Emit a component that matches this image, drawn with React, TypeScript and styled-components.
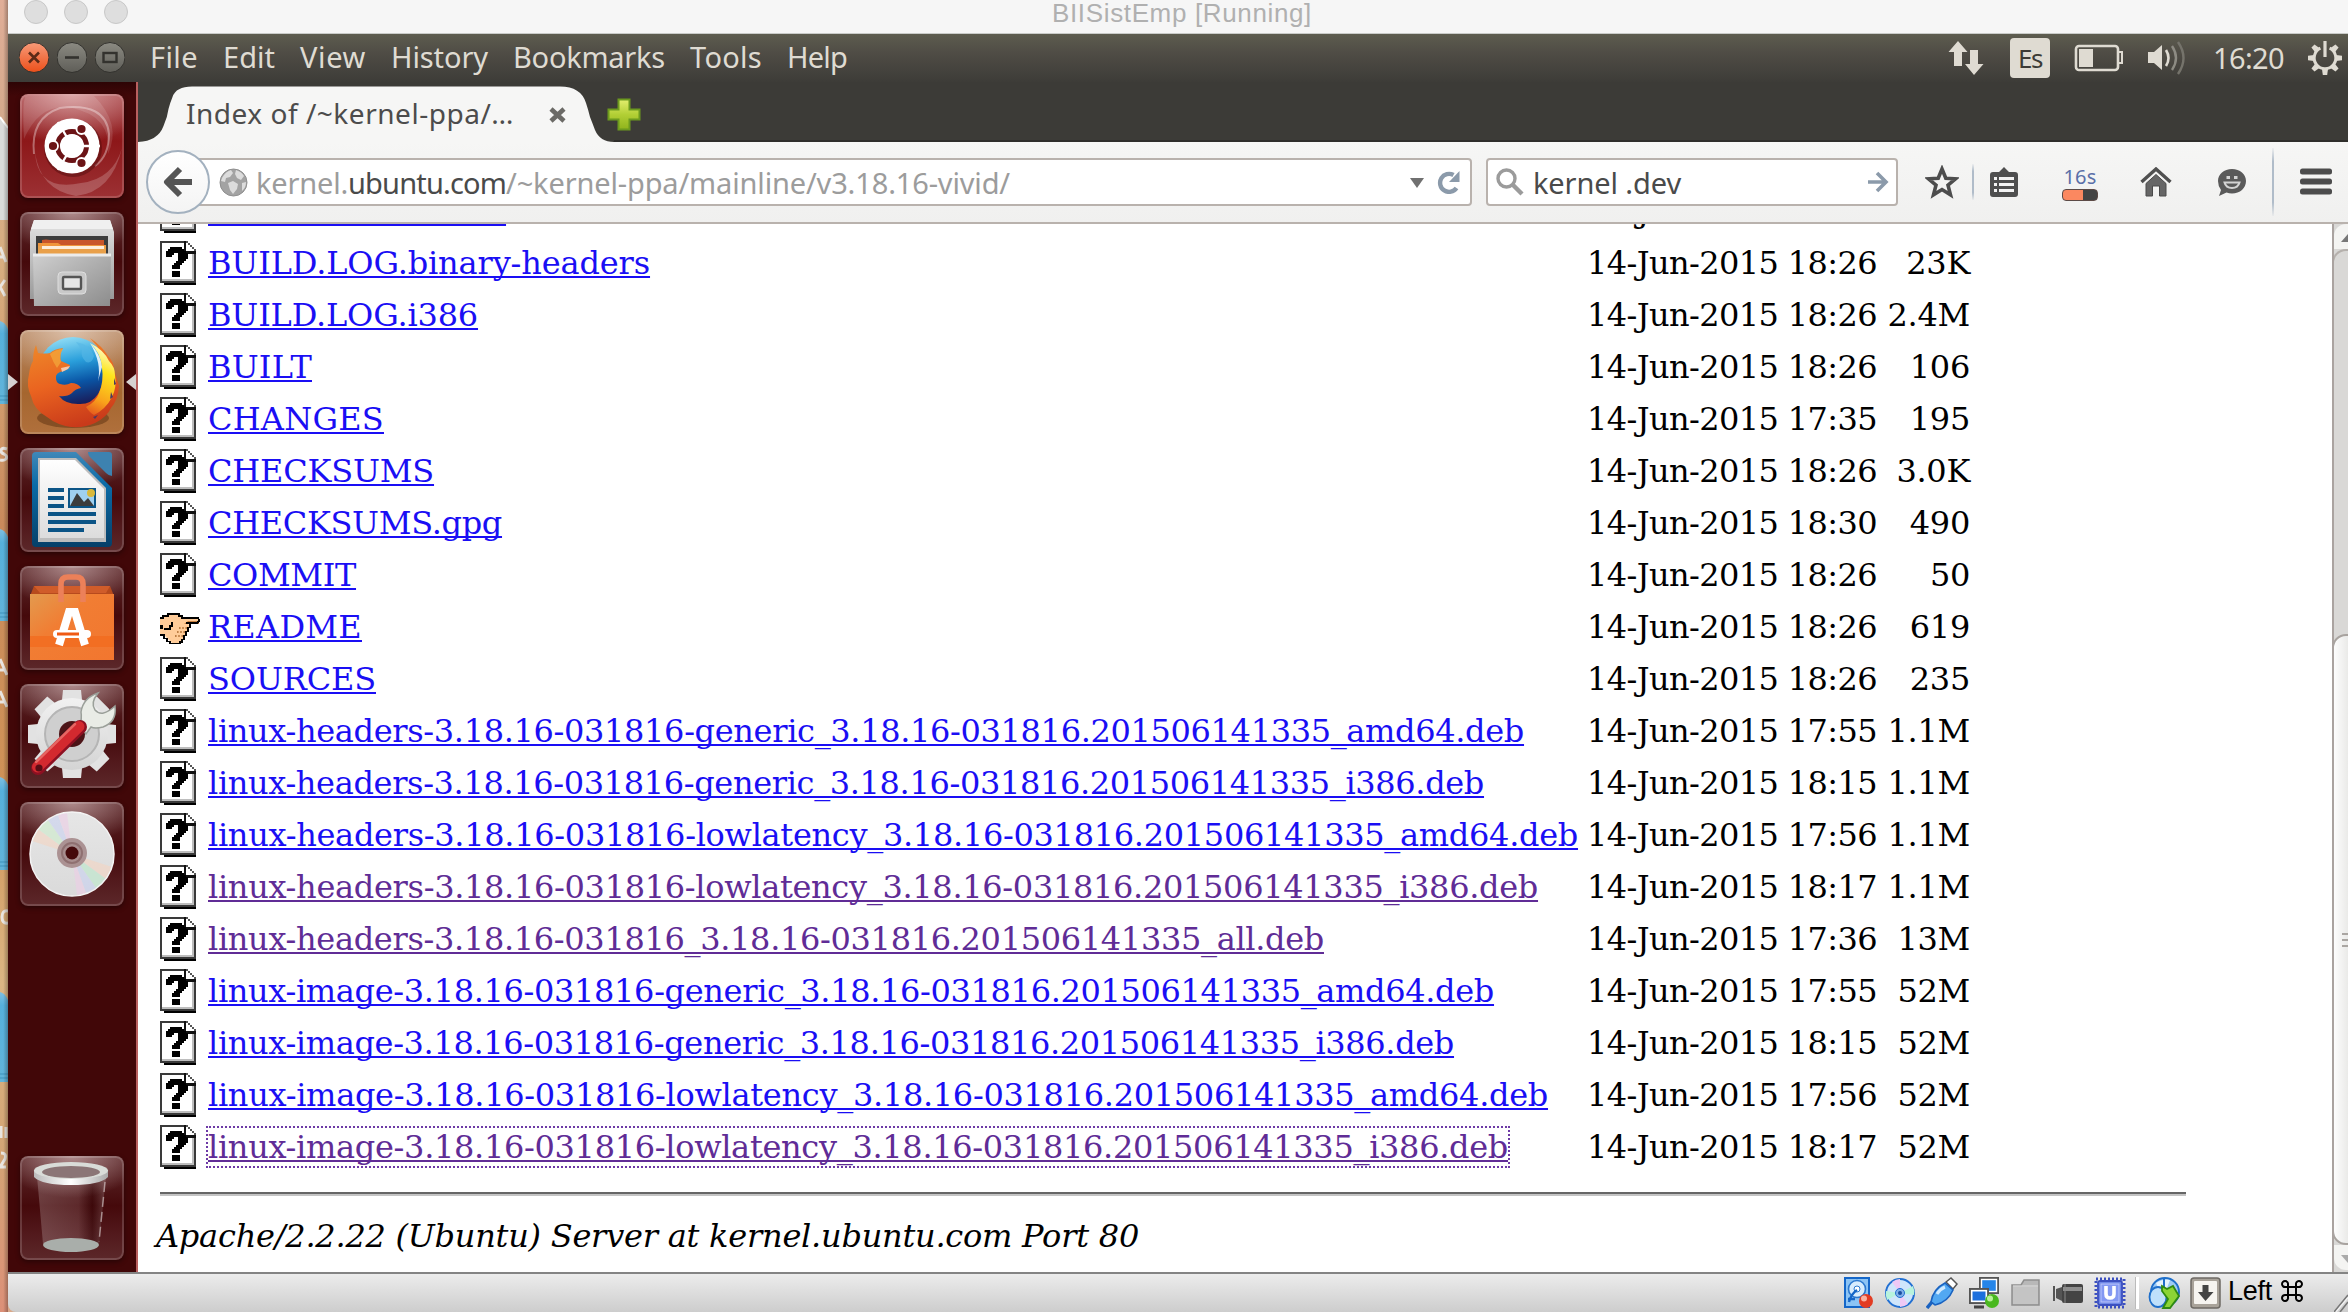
import React, { useLayoutEffect, useRef, useState } from "react";
import styled, { createGlobalStyle } from "styled-components";

const UI_FONT = '"Noto Sans", "Open Sans", sans-serif';
const PAGE_FONT = '"DejaVu Serif", serif';
const MAC_FONT = '"Liberation Sans", Arial, sans-serif';

const GlobalStyle = createGlobalStyle`
  html, body { margin: 0; padding: 0; background: #d9a98a; }
  * { box-sizing: border-box; }
  svg { display: block; flex: none; }
`;

/* ---------- text that keeps a fixed advance width ---------- */

const FitBox = styled.span<{ $w: number }>`
  display: inline-block;
  width: ${(p) => p.$w}px;
  white-space: pre;
`;

function Fit({ w, children }: { w: number; children: string }) {
  const ref = useRef<HTMLSpanElement>(null);
  const [spacing, setSpacing] = useState(0);
  useLayoutEffect(() => {
    if (ref.current) {
      const natural = ref.current.getBoundingClientRect().width;
      setSpacing((w - natural) / children.length);
    }
  }, [w, children]);
  return (
    <FitBox $w={w}>
      <span ref={ref} style={{ letterSpacing: spacing }}>
        {children}
      </span>
    </FitBox>
  );
}

/* ---------- frame ---------- */

const Screen = styled.div`
  display: flex;
  width: 2348px;
  height: 1312px;
  overflow: hidden;
  background: #d9a98a;
`;

const DesktopEdge = styled.div`
  flex: none;
  width: 8px;
  height: 1312px;
`;

const VmWindow = styled.div`
  flex: 1;
  min-width: 0;
  display: flex;
  flex-direction: column;
  border-bottom-left-radius: 8px;
  overflow: hidden;
`;

const TitleBar = styled.div`
  height: 34px;
  display: grid;
  grid-template-columns: 1044px 1fr;
  background: #f6f6f6;
  border-bottom: 1px solid #c9cbc8;
`;

const TrafficLights = styled.div`
  display: flex;
  gap: 16px;
  padding: 0 0 0 16px;
`;

const Light = styled.span`
  width: 24px;
  height: 24px;
  border-radius: 50%;
  background: #dedede;
  border: 1px solid #c8c8c8;
`;

const Title = styled.div`
  font: 26px/26px ${MAC_FONT};
  color: #b0b0b0;
`;

const TopPanel = styled.div`
  height: 48px;
  flex: none;
  display: flex;
  align-items: center;
  background: linear-gradient(#5d5c4f, #4f4c45 40%, #3d3c38);
  color: #dfdbd2;
  font: 29px/46px ${UI_FONT};
`;

const PanelButtons = styled.div`
  display: flex;
  gap: 8px;
  padding-left: 11px;
  width: 142px;
`;

const Menus = styled.nav`
  flex: 1;
  display: flex;
  gap: 25px;
  height: 48px;
`;

const Indicators = styled.div`
  display: flex;
  align-items: center;
  width: 400px;
`;

const Slot = styled.div<{ $w: number }>`
  flex: none;
  width: ${(p) => p.$w}px;
`;

const KeyboardBadge = styled.span`
  display: block;
  width: 40px;
  height: 40px;
  border-radius: 4px;
  background: #dfdbd2;
  color: #3c3b37;
  font: 26px/41px ${UI_FONT};
  text-align: center;
  letter-spacing: -1.5px;
`;

const Workspace = styled.div`
  height: 1190px;
  flex: none;
  display: flex;
`;

/* ---------- launcher ---------- */

const Launcher = styled.aside`
  flex: none;
  width: 130px;
  display: flex;
  flex-direction: column;
  gap: 14px;
  padding: 12px 0 12px;
  background: linear-gradient(#2d0405, #410708 14px);
  border-right: 2px solid #b9605f;
`;

const LauncherRow = styled.div<{ $last?: boolean }>`
  display: flex;
  align-items: center;
  justify-content: center;
  gap: 2px;
  height: 104px;
  flex: none;
  margin-top: ${(p) => (p.$last ? "auto" : "0")};
`;

const Tile = styled.div<{ $bg: string }>`
  flex: none;
  width: 104px;
  height: 104px;
  border-radius: 8px;
  background: ${(p) => p.$bg};
  box-shadow: inset 0 0 0 2px rgba(255, 255, 255, 0.16), 0 2px 5px rgba(0, 0, 0, 0.4);
`;

const glass =
  "radial-gradient(ellipse 70px 42px at 50% 0, rgba(255,235,235,.5), rgba(255,235,235,0)), linear-gradient(#5e2b2d 0, #45090b 48%, #52191c 75%, #5c282a)";
const redGlass =
  "radial-gradient(ellipse 80px 50px at 50% 0, rgba(255,225,225,.55), rgba(255,225,225,0)), linear-gradient(#a8474a, #8d1719 45%, #9c3134)";
const amberGlass =
  "radial-gradient(ellipse 70px 50px at 50% 0, rgba(255,245,235,.5), rgba(255,235,225,0)), linear-gradient(#ba8c69, #a5662f 60%, #b0703c)";

/* ---------- browser ---------- */

const Browser = styled.main`
  flex: 1;
  min-width: 0;
  display: flex;
  flex-direction: column;
  background: #fff;
`;

const TabStrip = styled.div`
  height: 60px;
  flex: none;
  display: flex;
  background: #3c3b37;
`;

const TabShape = styled.div`
  display: grid;
  width: 476px;
  height: 60px;
  > * {
    grid-area: 1 / 1;
  }
`;

const TabLabel = styled.div`
  display: flex;
  align-items: center;
  gap: 35px;
  padding: 5px 0 0 48px;
  height: 60px;
  font: 28px/36px ${UI_FONT};
  color: #4c4c4c;
  z-index: 1;
`;

const TabTitle = styled.div`
  margin-top: -4px;
`;

const NewTab = styled.div`
  flex: 1;
  padding-top: 16px;
  border-bottom: 2px solid #2f2e2b;
  svg {
    margin-left: -7px;
  }
`;

const NavBar = styled.div`
  height: 82px;
  flex: none;
  display: flex;
  align-items: center;
  background: linear-gradient(#f6f6f5, #f0f0ef);
  border-bottom: 2px solid #b9b2ad;
  padding-left: 8px;
  font: 29px/42px ${UI_FONT};
`;

const BackButton = styled.div`
  width: 64px;
  height: 64px;
  flex: none;
  border-radius: 50%;
  border: 2px solid #a3b1bf;
  background: linear-gradient(#fff, #f4f4f4);
  display: flex;
  align-items: center;
  justify-content: center;
  z-index: 1;
`;

const Field = styled.div<{ $w: number; $ml: number; $pl: number }>`
  width: ${(p) => p.$w}px;
  margin-left: ${(p) => p.$ml}px;
  padding-left: ${(p) => p.$pl}px;
  height: 48px;
  flex: none;
  display: flex;
  align-items: center;
  background: #fff;
  border: 2px solid #b9b2ad;
  border-radius: 4px;
  color: #4a4a4a;
`;

const FieldText = styled.div<{ $w: number }>`
  width: ${(p) => p.$w}px;
  flex: none;
  display: flex;
  margin-top: 2px;
`;

const Faded = styled.span`
  color: #9c9c9c;
`;

const ToolIcons = styled.div`
  display: flex;
  align-items: center;
  margin-left: 27px;
`;

const Divider = styled.span<{ $h: number; $l: number; $r: number }>`
  width: 2px;
  height: ${(p) => p.$h}px;
  margin: 0 ${(p) => p.$r}px 0 ${(p) => p.$l}px;
  background: linear-gradient(rgba(170, 183, 197, 0.1), #b0bcc9 20%, #b0bcc9 80%, rgba(170, 183, 197, 0.1));
`;

const Timer = styled.div`
  width: 36px;
  display: flex;
  flex-direction: column;
  align-items: center;
  gap: 2px;
  margin-top: 4px;
  font: 20px/20px ${UI_FONT};
  color: #5a6fa8;
`;

const Battery = styled.span`
  width: 36px;
  height: 12px;
  border-radius: 4px;
  border: 1px solid #5c4a46;
  background: linear-gradient(90deg, #fb8860 58%, #444 58%);
`;

const Viewport = styled.div`
  flex: 1;
  min-height: 0;
  display: flex;
`;

const Page = styled.div`
  flex: 1;
  min-width: 0;
  overflow: hidden;
  padding-left: 22px;
  font: 32px/52px ${PAGE_FONT};
  color: #000;
`;

const Listing = styled.div`
  margin-top: -40px;
`;

const Entry = styled.div`
  height: 52px;
  display: grid;
  grid-template-columns: 48px 1379px 290px 104px;
  align-items: center;
`;

const Link = styled.a<{ $visited?: boolean; $focus?: boolean }>`
  justify-self: start;
  line-height: 38px;
  margin: 0 -2px;
  border: 2px ${(p) => (p.$focus ? "dotted #6d3aa6" : "solid transparent")};
  color: ${(p) => (p.$visited ? "#602c96" : "#1a0ef4")};
  text-decoration: underline;
  text-decoration-thickness: 2px;
  text-underline-offset: 2px;
  text-decoration-skip-ink: none;
  span {
    text-decoration: inherit;
  }
`;

const When = styled.span`
  margin-top: 1px;
`;

const Size = styled.span`
  justify-self: end;
  margin-top: 1px;
  padding-right: 11px;
  letter-spacing: -0.3px;
`;

const Rule = styled.div`
  width: 2026px;
  height: 4px;
  margin: 20px 0 14px;
  background: #666;
  border-bottom: 2px solid #c4c4c4;
`;

const Address = styled.address`
  margin-left: -4px;
  font-style: italic;
`;

const ScrollBar = styled.div`
  width: 16px;
  flex: none;
  overflow: hidden;
  background: #d9d8d6;
  border-left: 2px solid #aaa3a0;
`;

const ScrollCap = styled.div<{ $h: number; $end?: boolean }>`
  width: 28px;
  height: ${(p) => p.$h}px;
  background: #f4f4f2;
  border-radius: ${(p) => (p.$end ? "0 0 0 12px" : "12px 0 0 0")};
  padding: 10px 0 0 7px;
`;

const Trough = styled.div`
  width: 30px;
  height: 385px;
  margin-left: -2px;
  border: 2px solid #b5b0ac;
  border-bottom: 0;
  border-radius: 14px 0 0 0;
  background: #d9d8d6;
`;

const Thumb = styled.div`
  width: 30px;
  height: 611px;
  margin-left: -2px;
  border: 2px solid #a8a39f;
  border-radius: 14px 0 0 14px;
  background: linear-gradient(90deg, #fdfdfd, #eaeae8 14px);
  display: flex;
  flex-direction: column;
  justify-content: center;
  gap: 4px;
  padding-left: 8px;
`;

const Grip = styled.span`
  height: 2px;
  background: #aaa6a2;
`;

const StatusBar = styled.div`
  height: 40px;
  flex: none;
  display: flex;
  align-items: center;
  border-top: 2px solid #848484;
  background: linear-gradient(#ececec, #cdcdcd);
  padding-left: 1834px;
  gap: 10px;
  font: 27px/34px ${MAC_FONT};
  color: #000;
`;

const StatusDivider = styled.span`
  width: 4px;
  height: 32px;
  margin: 0 -1px;
  background: linear-gradient(90deg, #bbb 1px, #fff 1px);
`;

const StatusText = styled.div`
  display: flex;
  gap: 9px;
  align-items: center;
  margin: -5px 0 0 -4px;
  width: 97px;
`;

/* ---------- drawings ---------- */

const EdgeArt = () => (
  <svg width="8" height="1312" viewBox="0 0 8 1312">
    <defs>
      <linearGradient id="wall" x1="0" y1="0" x2="0" y2="1">
        <stop offset="0" stopColor="#e0ae98" />
        <stop offset=".1" stopColor="#d3a98b" />
        <stop offset=".2" stopColor="#d8ae80" />
        <stop offset=".4" stopColor="#c98a5c" />
        <stop offset=".6" stopColor="#cf9257" />
        <stop offset=".75" stopColor="#dbb684" />
        <stop offset=".88" stopColor="#d3a475" />
        <stop offset="1" stopColor="#dc9078" />
      </linearGradient>
      <linearGradient id="fold" x1="0" y1="0" x2="0" y2="1">
        <stop offset="0" stopColor="#7fbfe0" />
        <stop offset=".15" stopColor="#56b0dc" />
        <stop offset="1" stopColor="#62b4da" />
      </linearGradient>
      <linearGradient id="edgeShade" x1="0" x2="1">
        <stop offset=".4" stopColor="#000" stopOpacity="0" />
        <stop offset="1" stopColor="#000" stopOpacity=".28" />
      </linearGradient>
    </defs>
    <rect width="8" height="1312" fill="url(#wall)" />
    <path d="M0 117l8 11v92H0z" fill="#dadada" />
    <path d="M0 117l8 11" stroke="#fff" strokeWidth="2" />
    {[
      [321, 83],
      [529, 92],
      [777, 93],
      [992, 90],
    ].map(([y, h]) => (
      <g key={y}>
        <path d={`M0 ${y}q5 1 8 8v${h - 8}H0z`} fill="url(#fold)" />
        <path d={`M0 ${y + h - 8}h8M0 ${y + h - 4}h8`} stroke="#3f93bd" strokeWidth="1" />
      </g>
    ))}
    <g stroke="#e9e4df" strokeWidth="3" fill="none">
      <path d="M0 247l6 15M0 257h4M5 280l-5 7 5 9" />
      <path d="M7 449q-6-2-6 2 0 2 3 3 4 2 2 5-2 2-6 1" />
      <path d="M0 659l7 16M0 670h5M0 691l7 16M0 702h5" />
      <path d="M8 911q-6-1-6 6t6 6" />
      <path d="M1 1126v12M6 1127v11M1 1153q6 0 4 6l-5 8h6" />
    </g>
    <rect width="8" height="1312" fill="url(#edgeShade)" />
  </svg>
);

const PanelButton = ({ kind }: { kind: "close" | "min" | "max" }) => (
  <svg width="30" height="32" viewBox="0 0 30 32">
    <defs>
      <linearGradient id="pbc" x1="0" y1="0" x2="0" y2="1">
        <stop offset="0" stopColor="#f79a78" />
        <stop offset="1" stopColor="#ec4f1a" />
      </linearGradient>
      <linearGradient id="pbg" x1="0" y1="0" x2="0" y2="1">
        <stop offset="0" stopColor="#8b8a82" />
        <stop offset="1" stopColor="#5f5e58" />
      </linearGradient>
    </defs>
    <circle cx="15" cy="15.500" r="15" fill={kind === "close" ? "url(#pbc)" : "url(#pbg)"} stroke="#33322e" />
    {kind === "close" && <path d="M10 10.500l10 10M20 10.500l-10 10" stroke="#5b2a17" strokeWidth="2.600" />}
    {kind === "min" && <path d="M8 15.500h14" stroke="#33322e" strokeWidth="2.600" />}
    {kind === "max" && <rect x="8.500" y="11" width="13" height="9" fill="none" stroke="#33322e" strokeWidth="2.400" />}
  </svg>
);

const PANEL_FG = "#dfdbd2";

const NetworkArrows = () => (
  <svg width="36" height="36" viewBox="0 0 36 36" fill={PANEL_FG}>
    <path d="M10 1l9.500 11H14v14H6V12H.5zM26 35l9.500-11H30V10h-8v14h-5z" />
  </svg>
);
const BatteryIcon = () => (
  <svg width="50" height="28" viewBox="0 0 50 28">
    <rect x="2" y="2" width="42" height="24" rx="3" fill="none" stroke={PANEL_FG} strokeWidth="2.6" />
    <rect x="5" y="5" width="14" height="18" fill={PANEL_FG} />
    <path d="M44 8h4v11h-4" fill="none" stroke={PANEL_FG} strokeWidth="2" />
  </svg>
);
const SoundIcon = () => (
  <svg width="40" height="36" viewBox="0 0 40 36" fill="none">
    <path d="M1 12h6l8-7v25l-8-7H1z" fill={PANEL_FG} />
    <path d="M19 10q5 8 0 16" stroke={PANEL_FG} strokeWidth="2.6" />
    <path d="M25 6q8 12 0 24" stroke="#8d8b83" strokeWidth="2.4" />
    <path d="M31 2q11 16 0 32" stroke="#75736b" strokeWidth="2.4" />
  </svg>
);
const SessionIcon = () => (
  <svg width="34" height="36" viewBox="-17 -18 34 36">
    <g fill={PANEL_FG}>
      {[45, 90, 135, 180, 225, 270, 315].map((a) => (
        <path key={a} d="M-3-11l.8-6h4.400l.8 6z" transform={`rotate(${a})`} />
      ))}
    </g>
    <path d="M-4.600 -9.800A10.800 10.800 0 1 0 4.600 -9.800" fill="none" stroke={PANEL_FG} strokeWidth="3" />
    <path d="M0-17V-1" stroke={PANEL_FG} strokeWidth="3.200" />
  </svg>
);

const Pointer = ({ flip }: { flip?: boolean }) => (
  <svg width="10" height="16" viewBox="0 0 10 16">
    <path d={flip ? "M10 0v16L0 8z" : "M0 0v16l10-8z"} fill="#d6d2d2" />
  </svg>
);

const UbuntuIcon = () => (
  <svg width="104" height="104" viewBox="0 0 104 104">
    <path d="M4 45Q20 8 52 14q40 8 36 46 14-30-14-58H6Q2 4 4 45z" fill="#fff" opacity=".12" />
    <path d="M14 60Q10 24 40 14 86 8 89 40q0 22-14 32" fill="none" stroke="#fff" strokeWidth="2" opacity=".35" />
    <path d="M15 58q2 40 46 31 32-4 41-35-10 44-46 48Q20 96 15 58z" fill="#fff" opacity=".2" />
    <circle cx="53" cy="54" r="29" fill="#4b0b0c" opacity=".45" />
    <circle cx="52" cy="52" r="27.500" fill="#fff" />
    <circle cx="52" cy="52" r="14.500" fill="none" stroke="#6b1416" strokeWidth="5" />
    <path d="M52 52L80 52M52 52L38 28M52 52L38 76" stroke="#fff" strokeWidth="2.400" />
    <circle cx="52" cy="52" r="11.500" fill="#fff" />
    {[
      [33, 52],
      [61.5, 35],
      [61.500, 69],
    ].map(([x, y]) => (
      <circle key={y} cx={x} cy={y} r="5" fill="#6b1416" stroke="#fff" strokeWidth="1.800" />
    ))}
  </svg>
);

const FilesIcon = () => (
  <svg width="104" height="104" viewBox="0 0 104 104">
    <defs>
      <linearGradient id="cab" x1="0" y1="0" x2="0" y2="1">
        <stop offset="0" stopColor="#e4e4e4" />
        <stop offset="1" stopColor="#999" />
      </linearGradient>
      <linearGradient id="cabf" x1="0" y1="0" x2="1" y2="1">
        <stop offset="0" stopColor="#d0d0d0" />
        <stop offset="1" stopColor="#8c8c8c" />
      </linearGradient>
    </defs>
    <path d="M14 8h76l4 12v67H10V20z" fill="url(#cab)" />
    <path d="M14 8h76l3 9H11z" fill="#f0f0f0" />
    <rect x="16" y="24" width="72" height="24" fill="#3d3d3d" />
    <path d="M22 28q4-1 8 0h54v16H22z" fill="#c9552a" />
    <path d="M18 31h20l3 2h45v12H18z" fill="#f0953c" />
    <path d="M18 34h68v10H18z" fill="#e9a04a" />
    <path d="M22 35.500h62" stroke="#fdeedd" strokeWidth="3" />
    <path d="M13 42h78l-1 52H14z" fill="url(#cabf)" />
    <path d="M13 43h78" stroke="#ececec" strokeWidth="3" />
    <rect x="38" y="60" width="28" height="22" rx="4" fill="#c9c9c9" stroke="#dedede" />
    <rect x="43" y="65" width="18" height="12" rx="1" fill="#e6e6e6" stroke="#555" strokeWidth="2.400" />
  </svg>
);

const FirefoxIcon = () => (
  <svg width="104" height="104" viewBox="0 0 104 104">
    <defs>
      <linearGradient id="fglobe" x1=".4" y1="0" x2=".6" y2="1">
        <stop offset="0" stopColor="#8fdcf5" />
        <stop offset=".35" stopColor="#2a9fdb" />
        <stop offset=".65" stopColor="#0a55a5" />
        <stop offset="1" stopColor="#1b1550" />
      </linearGradient>
      <linearGradient id="fbody" x1=".2" y1="0" x2=".5" y2="1">
        <stop offset="0" stopColor="#ee8a2a" />
        <stop offset=".5" stopColor="#ea6420" />
        <stop offset="1" stopColor="#c93a1a" />
      </linearGradient>
      <linearGradient id="ftail" x1=".4" y1="0" x2=".2" y2="1">
        <stop offset="0" stopColor="#fffbd0" />
        <stop offset=".35" stopColor="#fde51c" />
        <stop offset=".75" stopColor="#f9a21b" />
        <stop offset="1" stopColor="#e5581e" />
      </linearGradient>
    </defs>
    <ellipse cx="53" cy="88" rx="36" ry="10" fill="#5b3010" opacity=".5" />
    <circle cx="53" cy="42" r="35" fill="url(#fglobe)" />
    <path d="M56 12q14 2 18 14-2 8-8 6-6-6-4-12z" fill="#57b7e6" opacity=".6" />
    <path
      d="M16 15l2 8q6 1 12 0 4-4 13-5-4 6-2 13l9 4q0 4-7 6-8 2-7 7 0 5 4 6 6 2 11-1 7 0 10 5-6 1-9 5-5 4-13 3 6 8 19 8 13 1 20-10 6-9 5-24-1-14-6-24l-7-8q12 8 18 18 6 6 6 14l5 16q-1 14-8 22-4 9-16 15-10 5-24 4-14-2-24-10Q14 80 11 66 6 56 9 44q1-8 4-13 0-9 3-16z"
      fill="url(#fbody)"
    />
    <path
      d="M70 13q14 7 19 18 6 6 6 14 2 12-3 22-6 12-18 18-4-2-8-8 10-5 13-14 5-12 3-25-1-15-12-25z"
      fill="url(#ftail)"
    />
    <path d="M70 13q11 12 12 24l-4 14q4-18-8-38z" fill="#fff" opacity=".85" />
    <path d="M41 38l9-2-2 3-6 3z" fill="#f3c9ad" />
    <path d="M30 24q6-5 13-5-4 6-2 13l-4 6q-4-6-7-14z" fill="#f4a93c" opacity=".7" />
    <path d="M94 48l2 6-2 1zM91 62l2 5-3 2zM73 87l5-2-3 4z" fill="#4d3a60" />
  </svg>
);

const WriterIcon = () => (
  <svg width="104" height="104" viewBox="0 0 104 104">
    <defs>
      <linearGradient id="wr" x1="0" y1="0" x2="0" y2="1">
        <stop offset="0" stopColor="#4088b8" />
        <stop offset=".35" stopColor="#0a6aa6" />
        <stop offset="1" stopColor="#063f68" />
      </linearGradient>
      <linearGradient id="pg" x1="0" y1="0" x2="0" y2="1">
        <stop offset="0" stopColor="#fff" />
        <stop offset="1" stopColor="#dcdcdc" />
      </linearGradient>
    </defs>
    <path d="M16 4h40l36 36v55q0 4-4 4H16q-4 0-4-4V8q0-4 4-4z" fill="url(#wr)" />
    <path d="M68 4h21q3 0 3 3v21q-3 0-6-3L69 8q-1-2-1-4z" fill="#3d82b0" />
    <path d="M18 10h38l30 30v54H18z" fill="#bdbdbd" />
    <path d="M20 12h35l29 29v49H20z" fill="url(#pg)" />
    <path d="M28 42h16M28 50h16M28 58h16M28 66h48M28 74h48M28 82h36" stroke="#0b5486" strokeWidth="4" />
    <rect x="49" y="41" width="26" height="18" fill="#9fd0f0" stroke="#0b5486" strokeWidth="2" />
    <circle cx="71" cy="45" r="4" fill="#d9b93c" />
    <path d="M50 58l7-13 7 9 4-4 6 8z" fill="#3c3c3c" />
  </svg>
);

const SoftwareIcon = () => (
  <svg width="104" height="104" viewBox="0 0 104 104">
    <defs>
      <linearGradient id="bag" x1="0" y1="0" x2="1" y2="1">
        <stop offset="0" stopColor="#e39a4e" />
        <stop offset=".4" stopColor="#f17d33" />
        <stop offset="1" stopColor="#f2762f" />
      </linearGradient>
    </defs>
    <path d="M14 20h76l4 10H10z" fill="#b74a1d" />
    <path d="M14 20h76l-4 7H20z" fill="#d05c2a" />
    <rect x="10" y="28" width="84" height="66" fill="url(#bag)" />
    <rect x="10" y="70" width="84" height="11" fill="#f26a1d" opacity=".7" />
    <path d="M41 36V18q0-7 7-7h8q7 0 7 7v18" fill="none" stroke="#ec8059" strokeWidth="5.600" />
    <path d="M39 79l10-33h6L65 79" fill="none" stroke="#fff" strokeWidth="8" />
    <rect x="33" y="64" width="38" height="8" rx="4" fill="#fff" />
    <rect x="37" y="66.500" width="22" height="3" fill="#f05a14" />
  </svg>
);

const SettingsIcon = () => (
  <svg width="104" height="104" viewBox="0 0 104 104">
    <defs>
      <linearGradient id="gr" x1="0" y1="0" x2="0" y2="1">
        <stop offset="0" stopColor="#f1f1f1" />
        <stop offset="1" stopColor="#d4d4d4" />
      </linearGradient>
    </defs>
    {[0, 45, 90, 135].map((a) => (
      <path key={a} d="M42 16l1-10h18l1 10v68l-1 10H43l-1-10z" transform={`rotate(${a} 52 50)`} fill="#e2e2e2" />
    ))}
    <circle cx="52" cy="50" r="36" fill="url(#gr)" />
    <circle cx="52" cy="50" r="27" fill="#cfcfcf" stroke="#b5b5b5" strokeWidth="2" />
    <circle cx="52" cy="50" r="13" fill="#4c1417" />
    <path d="M60 42q2-8 1-14 2-14 17-19-8 10-3 17 7 8 20-4 2 16-12 21-8 2-12 0l-5 7z" fill="#e9ece6" stroke="#9ba09a" strokeWidth="1.500" />
    <path d="M18 84L60 43" stroke="#8d1022" strokeWidth="14" strokeLinecap="round" />
    <path d="M17.500 83L59 42.500" stroke="#d3292f" strokeWidth="11" strokeLinecap="round" />
    <path d="M16 78L55 40" stroke="#f08078" strokeWidth="2.500" strokeLinecap="round" opacity=".7" />
    <circle cx="19" cy="84" r="3.600" fill="#5a0d15" />
  </svg>
);

const DiscIcon = () => (
  <svg width="104" height="104" viewBox="0 0 104 104">
    <defs>
      <linearGradient id="cd" x1="0" y1="0" x2="0" y2="1">
        <stop offset="0" stopColor="#e6e6e6" />
        <stop offset="1" stopColor="#dadada" />
      </linearGradient>
    </defs>
    <circle cx="52" cy="52" r="42" fill="url(#cd)" />
    <g opacity=".65">
      <path d="M52 52L12 39q2-7 6-12z" fill="#f3d6c4" />
      <path d="M52 52L18 27q4-5 10-9z" fill="#cfeccd" />
      <path d="M52 52L28 18q5-3 10-5z" fill="#cbd3f0" />
      <path d="M52 52L38 13q5-2 9-2z" fill="#eccfe6" />
      <path d="M52 52l40 13q-2 7-6 12z" fill="#f3d6c4" />
      <path d="M52 52l34 25q-4 5-10 9z" fill="#bfe9cd" />
      <path d="M52 52l24 34q-5 3-10 5z" fill="#cbd3f0" />
      <path d="M52 52l14 39q-5 2-9 2z" fill="#eccfe6" />
    </g>
    <circle cx="52" cy="52" r="42" fill="none" stroke="#f4f4f4" strokeWidth="1.500" />
    <circle cx="52" cy="51" r="13" fill="#8f7071" stroke="#ab9293" strokeWidth="4" />
    <circle cx="52" cy="51" r="9" fill="#a88e8f" />
    <circle cx="52" cy="51" r="6.500" fill="#45090b" />
  </svg>
);

const TrashIcon = () => (
  <svg width="104" height="104" viewBox="0 0 104 104">
    <defs>
      <linearGradient id="tb" x1="0" x2="1">
        <stop offset="0" stopColor="#fff" stopOpacity=".2" />
        <stop offset=".6" stopColor="#fff" stopOpacity=".13" />
        <stop offset=".8" stopColor="#000" stopOpacity=".12" />
        <stop offset="1" stopColor="#fff" stopOpacity=".2" />
      </linearGradient>
      <linearGradient id="rim" x1="0" x2="1">
        <stop offset="0" stopColor="#bbb" />
        <stop offset=".5" stopColor="#fff" />
        <stop offset="1" stopColor="#aaa" />
      </linearGradient>
    </defs>
    <path d="M17 20l6 68q28 10 56 0l7-68z" fill="url(#tb)" />
    <path d="M85 26l-6 60" stroke="#cbb" strokeWidth="1.500" strokeDasharray="10 5" opacity=".7" />
    <ellipse cx="51" cy="89" rx="28" ry="7" fill="#a9aeaa" />
    <path d="M14 14v7q8 8 37 8t37-8v-7z" fill="url(#rim)" />
    <ellipse cx="51" cy="14.500" rx="37" ry="8.500" fill="#d9dcd8" />
    <ellipse cx="51" cy="16" rx="29" ry="6" fill="#8b7576" />
  </svg>
);

const TabArt = () => (
  <svg width="476" height="60" viewBox="0 0 476 60">
    <path d="M0 60H476Q462 60 457 48q-3-8-5-13-2-8-4-14Q443 4.500 422 4.500H54Q38 4.500 34.500 15 32 21 30.500 27q-1 8-5 17Q20 59 0 60z" fill="#f6f6f5" />
  </svg>
);

const TabClose = () => (
  <svg width="17" height="16" viewBox="0 0 17 16">
    <path d="M2 2l13 12M15 2L2 14" stroke="#6b6a66" strokeWidth="4.600" />
  </svg>
);

const PlusIcon = () => (
  <svg width="34" height="33" viewBox="0 0 34 33">
    <defs>
      <linearGradient id="pl" x1="0" y1="0" x2="0" y2="1">
        <stop offset="0" stopColor="#e3ee6e" />
        <stop offset=".5" stopColor="#b2cf35" />
        <stop offset="1" stopColor="#8fb31c" />
      </linearGradient>
    </defs>
    <path d="M11.500 1.500h11v10h10v10h-10v10h-11v-10h-10v-10h10z" fill="url(#pl)" stroke="#6d9a1f" strokeWidth="2" />
  </svg>
);

const BackArrow = () => (
  <svg width="30" height="32" viewBox="0 0 30 32">
    <path d="M17 3L4 16l13 13M5 16h24" fill="none" stroke="#555" strokeWidth="6" strokeLinejoin="round" />
  </svg>
);

const GlobeIcon = () => (
  <svg width="29" height="29" viewBox="0 0 29 29">
    <circle cx="14.500" cy="14.500" r="13.500" fill="#a3a3a3" stroke="#8f8f8f" />
    <path d="M3 10q4-7 9-8l2 3-3 4-4 1-1 4-4-1zM17 2q6 2 8 6l-3 4-4-2-2-4zM9 15l5-2 5 3-1 5-4 5-3-4zM23 15l4-1q0 6-4 9z" fill="#dcdcdc" />
  </svg>
);

const DropTriangle = () => (
  <svg width="16" height="12" viewBox="0 0 16 12">
    <path d="M1 2h14L8 12z" fill="#707070" />
  </svg>
);

const ReloadIcon = () => (
  <svg width="24" height="24" viewBox="0 0 24 24">
    <path d="M19.500 18A9 9 0 1 1 16.500 5" fill="none" stroke="#8b9aaa" strokeWidth="4.400" />
    <path d="M22.500 1v11H12z" fill="#8b9aaa" />
  </svg>
);

const LensIcon = () => (
  <svg width="28" height="28" viewBox="0 0 28 28">
    <circle cx="10.500" cy="10.500" r="8.500" fill="none" stroke="#9b9b9b" strokeWidth="3.400" />
    <path d="M17 17l9 9" stroke="#9b9b9b" strokeWidth="4.400" />
  </svg>
);

const GoArrow = () => (
  <svg width="22" height="22" viewBox="0 0 22 22">
    <path d="M1 11h17M10 2l9 9-9 9" fill="none" stroke="#8b9aaa" strokeWidth="3.600" />
  </svg>
);

const StarIcon = () => (
  <svg width="34" height="34" viewBox="0 0 34 34">
    <path d="M17 4l3.800 9.200 9.700.6-7.500 6.300 2.500 9.700L17 24.500l-8.500 5.300L11 20.100l-7.500-6.300 9.700-.6z" fill="none" stroke="#4d4d4d" strokeWidth="3.600" />
  </svg>
);

const ClipboardIcon = () => (
  <svg width="28" height="30" viewBox="0 0 28 30">
    <path d="M9 5l5-5 5 5h6q3 0 3 3v19q0 3-3 3H3q-3 0-3-3V8q0-3 3-3z" fill="#4f4f4f" />
    <path d="M4 10h3v3H4zM9 10h15v3H9zM4 16h3v3H4zM9 16h15v3H9zM4 22h3v3H4zM9 22h15v3H9z" fill="#f3f3f3" />
  </svg>
);

const HomeIcon = () => (
  <svg width="32" height="30" viewBox="0 0 32 30">
    <path d="M1.500 15L16 2l14.500 13" fill="none" stroke="#505050" strokeWidth="3.400" />
    <path d="M16 4.800L4 15.500" stroke="#f3f3f3" strokeWidth="0" />
    <path d="M6 16.500L16 7.500l10 9V29h-6.500V19h-7v10H6z" fill="#666" stroke="#4a4a4a" />
  </svg>
);

const ChatIcon = () => (
  <svg width="30" height="28" viewBox="0 0 30 28">
    <path d="M15 1c8 0 14 5 14 12s-6 12.500-14 12.500q-3 0-5.500-1L2 28l2-6Q1 18 1 13C1 6 7 1 15 1z" fill="#5a5a5a" />
    <path d="M7.500 14.500q1.500 5.500 7.500 5.500t7.500-5.500z" fill="none" stroke="#d4d4d4" strokeWidth="2" />
    <path d="M9.500 9.500h3.500M17 9.500h3.500" stroke="#d4d4d4" strokeWidth="3" fill="none" />
  </svg>
);

const MenuIcon = () => (
  <svg width="32" height="28" viewBox="0 0 32 28">
    {[0, 10, 20].map((y) => (
      <rect key={y} y={y + 0.5} width="32" height="6" rx="2.500" fill="#4c4c4c" />
    ))}
  </svg>
);

const UnknownFile = () => (
  <svg width="40" height="44" viewBox="0 0 20 22" shapeRendering="crispEdges">
    <path d="M2 20.500h16V22H2zM17 5h1v16h-1z" fill="#000" />
    <path d="M0 0h13l5 5v16H0z" fill="#3a3a3a" />
    <path d="M.8.800H17V20H.8z" fill="#fff" />
    <path d="M13 0h7v5.500h-2z" fill="#fff" />
    <path d="M16 6.500h1V20H1v-1h15z" fill="#bdbdbd" />
    <path d="M12 0h1v5h5v1.500h-6z" fill="#111" />
    <path d="M13 0h1v1h1v1h1v1h1v1h1v1h-1V4h-1V3h-1V2h-1V1h-1z" fill="#555" />
    <path
      d="M5 3h6v1h1v1h1v1h1v3h-1v1h-1v1h-1v1h-1v2H6v-2h1v-1h1v-1h1V6H7v1H6v1H3V5h1V4h1zM6 15h4v3H6z"
      fill="#000"
    />
  </svg>
);

const HandFile = () => (
  <svg width="40" height="44" viewBox="0 0 20 22">
    <path d="M0 7L3 5l2-1h4l2 2h8q1 1 .5 2l-1 1h-5l1 1v2l-1 1v2l-2 1v2l-2 1H6l-2-2-2-2H0z" fill="#ffcc99" />
    <path d="M14 8h5.500v1.500H12z" fill="#c98040" />
    <path
      d="M0 6.500h1.500v-1H4v-1h5.500v1H11v1h8q.7.700.5 1.500l-.8.800H13M15 9.500v1.700h-1v2h-1v2h-1v2h-1v1.200h-1v.8H5v-1H3.500v-1.500H2V15H0M0 10.500h1v1H0M2 12h3v-1.500h1V8.500"
      fill="none"
      stroke="#000"
      strokeWidth=".9"
      shapeRendering="crispEdges"
    />
    <path d="M9.500 11.500h4M8.500 13.500h4M7.500 15.500h4" stroke="#a8662a" strokeWidth=".7" strokeDasharray=".8 .8" />
  </svg>
);

const StatusHdd = () => (
  <svg width="32" height="32" viewBox="0 0 32 32">
    <rect x="3" y="1" width="24" height="29" fill="#8cc4f5" stroke="#1466c8" strokeWidth="2" />
    <circle cx="15" cy="12" r="8.500" fill="#d7ecfd" stroke="#2b78cf" strokeWidth="1.600" />
    <circle cx="15" cy="12" r="3" fill="#fff" stroke="#2b78cf" />
    <path d="M7 25q2-8 8-12M6 22h7" stroke="#1466c8" strokeWidth="2.400" fill="none" />
    <circle cx="24" cy="24" r="7" fill="#e23b22" />
    <circle cx="22" cy="21.500" r="3" fill="#f9b0a0" />
  </svg>
);
const StatusDisc = () => (
  <svg width="32" height="32" viewBox="0 0 32 32">
    <circle cx="16" cy="16" r="14" fill="#cfe6fb" stroke="#2270d2" strokeWidth="2" />
    <path d="M16 16L8 5q4-3 8-3zM16 16l8 11q-4 3-8 3z" fill="#efc9f5" />
    <path d="M16 16L29 9q2 5 1 9zM16 16L3 23q-2-5-1-9z" fill="#b8f3dd" />
    <circle cx="16" cy="16" r="4.500" fill="#7fb0ea" stroke="#2270d2" />
    <circle cx="16" cy="16" r="2" fill="#1b4fa0" />
  </svg>
);
const StatusUsb = () => (
  <svg width="32" height="32" viewBox="0 0 32 32">
    <path d="M20 5l5-4 6 6-4 5z" fill="#fff" stroke="#555" strokeWidth="1.500" />
    <path d="M5 25Q7 12 19 6l8 7q-5 12-18 15z" fill="#52a8f2" stroke="#1a62c0" strokeWidth="1.600" />
    <path d="M11 17q3-5 8-7" stroke="#cfe9ff" strokeWidth="3" fill="none" />
    <path d="M1 31l5-6" stroke="#1a62c0" strokeWidth="3.500" />
  </svg>
);
const StatusNet = () => (
  <svg width="32" height="32" viewBox="0 0 32 32">
    <rect x="12" y="1" width="18" height="15" fill="#2585e8" stroke="#555" strokeWidth="2" />
    <rect x="13.500" y="2.500" width="15" height="12" fill="none" stroke="#fff" strokeWidth="1.400" />
    <rect x="2" y="12" width="18" height="14" fill="#1c6fdd" stroke="#555" strokeWidth="2" />
    <rect x="3.700" y="13.700" width="14.600" height="10.600" fill="none" stroke="#fff" strokeWidth="1.600" />
    <path d="M6 30h10" stroke="#444" strokeWidth="3" />
    <circle cx="24" cy="24" r="7" fill="#49b81f" />
    <circle cx="22" cy="21.500" r="3" fill="#b9f09a" />
  </svg>
);
const StatusFolder = () => (
  <svg width="32" height="32" viewBox="0 0 32 32">
    <path d="M2 8h9l3-5h15v25H2z" fill="#b8b8b8" stroke="#8e8e8e" strokeWidth="1.500" />
    <path d="M3 10h25v17H3z" fill="#c4c4c4" />
    <path d="M3 9h25" stroke="#e2e2e2" />
  </svg>
);
const StatusCamera = () => (
  <svg width="32" height="32" viewBox="0 0 32 32">
    <rect x="10" y="7" width="21" height="19" rx="2" fill="#444" />
    <path d="M11 10h19v4H11z" fill="#8f8f8f" />
    <path d="M1 9h2v15H1zM4 12l6-2v14l-6-3z" fill="#555" />
    <path d="M13 7v19" stroke="#888" />
  </svg>
);
const StatusChip = () => (
  <svg width="32" height="32" viewBox="0 0 32 32">
    <rect x="2" y="2" width="28" height="28" fill="none" stroke="#3c50c0" strokeWidth="3" strokeDasharray="2 2" />
    <rect x="4" y="4" width="24" height="24" rx="2" fill="#6f87e6" stroke="#3c50c0" strokeWidth="1.800" />
    <rect x="7" y="7" width="18" height="18" fill="#8398f2" stroke="#b9c5fb" />
    <path d="M12 9v8q0 4 4 4t4-4V9" fill="none" stroke="#fff" strokeWidth="3.600" />
  </svg>
);
const StatusMouse = () => (
  <svg width="32" height="32" viewBox="0 0 32 32">
    <circle cx="17" cy="15" r="14" fill="#9ccaf5" stroke="#1f6fca" strokeWidth="2" />
    <path d="M8 6q8-5 14-3l-3 8-8 2z" fill="#e5f3fe" />
    <path d="M16 1v14" stroke="#1f6fca" strokeWidth="2" />
    <ellipse cx="10" cy="20" rx="8.500" ry="10" fill="#bfe0fb" stroke="#1f6fca" strokeWidth="1.800" />
    <path d="M14 9l5 3 6-3 6 10-9 12h-7l5-9-6-8z" fill="#8cd436" stroke="#2f8a12" strokeWidth="1.800" />
  </svg>
);
const StatusKey = () => (
  <svg width="32" height="32" viewBox="0 0 32 32">
    <rect x="1" y="1" width="29" height="30" rx="3" fill="#a9a39a" stroke="#6e6a64" strokeWidth="1.500" />
    <rect x="4" y="4" width="23" height="23" rx="1" fill="#f6f4f0" />
    <path d="M12.500 8h6v7h5L15.500 24 8 15h4.500z" fill="#444" />
  </svg>
);
const ResizeGrip = () => (
  <svg width="14" height="38" viewBox="0 0 14 38">
    <path d="M0 38L14 21M6 38l8-10" stroke="#777" strokeWidth="1.600" />
    <path d="M2 38l12-14.500" stroke="#fff" strokeWidth="1.400" opacity=".7" />
  </svg>
);

/* ---------- data ---------- */

type Row = { name: string; w: number; date: string; size: string; visited?: boolean; focus?: boolean; hand?: boolean };

const V = "3.18.16-031816.201506141335";
const rows: Row[] = [
  { name: "BUILD.LOG.amd64", w: 298, date: "14-Jun-2015 18:26", size: "2.5M" },
  { name: "BUILD.LOG.binary-headers", w: 442, date: "14-Jun-2015 18:26", size: "23K" },
  { name: "BUILD.LOG.i386", w: 270, date: "14-Jun-2015 18:26", size: "2.4M" },
  { name: "BUILT", w: 104, date: "14-Jun-2015 18:26", size: "106" },
  { name: "CHANGES", w: 176, date: "14-Jun-2015 17:35", size: "195" },
  { name: "CHECKSUMS", w: 226, date: "14-Jun-2015 18:26", size: "3.0K" },
  { name: "CHECKSUMS.gpg", w: 294, date: "14-Jun-2015 18:30", size: "490" },
  { name: "COMMIT", w: 148, date: "14-Jun-2015 18:26", size: "50" },
  { name: "README", w: 154, date: "14-Jun-2015 18:26", size: "619", hand: true },
  { name: "SOURCES", w: 168, date: "14-Jun-2015 18:26", size: "235" },
  { name: `linux-headers-3.18.16-031816-generic_${V}_amd64.deb`, w: 1316, date: "14-Jun-2015 17:55", size: "1.1M" },
  { name: `linux-headers-3.18.16-031816-generic_${V}_i386.deb`, w: 1276, date: "14-Jun-2015 18:15", size: "1.1M" },
  { name: `linux-headers-3.18.16-031816-lowlatency_${V}_amd64.deb`, w: 1370, date: "14-Jun-2015 17:56", size: "1.1M" },
  { name: `linux-headers-3.18.16-031816-lowlatency_${V}_i386.deb`, w: 1330, date: "14-Jun-2015 18:17", size: "1.1M", visited: true },
  { name: `linux-headers-3.18.16-031816_${V}_all.deb`, w: 1116, date: "14-Jun-2015 17:36", size: "13M", visited: true },
  { name: `linux-image-3.18.16-031816-generic_${V}_amd64.deb`, w: 1286, date: "14-Jun-2015 17:55", size: "52M" },
  { name: `linux-image-3.18.16-031816-generic_${V}_i386.deb`, w: 1246, date: "14-Jun-2015 18:15", size: "52M" },
  { name: `linux-image-3.18.16-031816-lowlatency_${V}_amd64.deb`, w: 1340, date: "14-Jun-2015 17:56", size: "52M" },
  { name: `linux-image-3.18.16-031816-lowlatency_${V}_i386.deb`, w: 1300, date: "14-Jun-2015 18:17", size: "52M", visited: true, focus: true },
];

const menus: [string, number][] = [
  ["File", 48],
  ["Edit", 52],
  ["View", 66],
  ["History", 97],
  ["Bookmarks", 152],
  ["Tools", 72],
  ["Help", 60],
];

export default function App() {
  return (
    <Screen>
      <GlobalStyle />
      <DesktopEdge>
        <EdgeArt />
      </DesktopEdge>
      <VmWindow>
        <TitleBar>
          <TrafficLights>
            <Light />
            <Light />
            <Light />
          </TrafficLights>
          <Title>
            <Fit w={260}>BIISistEmp [Running]</Fit>
          </Title>
        </TitleBar>
        <TopPanel>
          <PanelButtons>
            <PanelButton kind="close" />
            <PanelButton kind="min" />
            <PanelButton kind="max" />
          </PanelButtons>
          <Menus>
            {menus.map(([label, w]) => (
              <Fit key={label} w={w}>
                {label}
              </Fit>
            ))}
          </Menus>
          <Indicators>
            <Slot $w={62}>
              <NetworkArrows />
            </Slot>
            <Slot $w={64}>
              <KeyboardBadge>Es</KeyboardBadge>
            </Slot>
            <Slot $w={73}>
              <BatteryIcon />
            </Slot>
            <Slot $w={66}>
              <SoundIcon />
            </Slot>
            <Slot $w={95}>
              <Fit w={71}>16:20</Fit>
            </Slot>
            <SessionIcon />
          </Indicators>
        </TopPanel>
        <Workspace>
          <Launcher>
            <LauncherRow>
              <Tile $bg={redGlass}>
                <UbuntuIcon />
              </Tile>
            </LauncherRow>
            <LauncherRow>
              <Tile $bg={glass}>
                <FilesIcon />
              </Tile>
            </LauncherRow>
            <LauncherRow>
              <Pointer />
              <Tile $bg={amberGlass}>
                <FirefoxIcon />
              </Tile>
              <Pointer flip />
            </LauncherRow>
            <LauncherRow>
              <Tile $bg={glass}>
                <WriterIcon />
              </Tile>
            </LauncherRow>
            <LauncherRow>
              <Tile $bg={glass}>
                <SoftwareIcon />
              </Tile>
            </LauncherRow>
            <LauncherRow>
              <Tile $bg={glass}>
                <SettingsIcon />
              </Tile>
            </LauncherRow>
            <LauncherRow>
              <Tile $bg={glass}>
                <DiscIcon />
              </Tile>
            </LauncherRow>
            <LauncherRow $last>
              <Tile $bg={glass}>
                <TrashIcon />
              </Tile>
            </LauncherRow>
          </Launcher>
          <Browser>
            <TabStrip>
              <TabShape>
                <TabArt />
                <TabLabel>
                  <TabTitle>
                    <Fit w={328}>Index of /~kernel-ppa/…</Fit>
                  </TabTitle>
                  <TabClose />
                </TabLabel>
              </TabShape>
              <NewTab>
                <PlusIcon />
              </NewTab>
            </TabStrip>
            <NavBar>
              <BackButton>
                <BackArrow />
              </BackButton>
              <Field $w={1278} $ml={-16} $pl={23}>
                <Slot $w={37}>
                  <GlobeIcon />
                </Slot>
                <FieldText $w={1153}>
                  <Faded>
                    <Fit w={92}>kernel.</Fit>
                  </Faded>
                  <Fit w={158}>ubuntu.com</Fit>
                  <Faded>
                    <Fit w={504}>/~kernel-ppa/mainline/v3.18.16-vivid/</Fit>
                  </Faded>
                </FieldText>
                <Slot $w={28}>
                  <DropTriangle />
                </Slot>
                <ReloadIcon />
              </Field>
              <Field $w={412} $ml={14} $pl={8}>
                <Slot $w={37}>
                  <LensIcon />
                </Slot>
                <FieldText $w={334}>
                  <Fit w={148}>kernel .dev</Fit>
                </FieldText>
                <GoArrow />
              </Field>
              <ToolIcons>
                <StarIcon />
                <Divider $h={36} $l={13} $r={16} />
                <ClipboardIcon />
                <Slot $w={44} />
                <Timer>
                  <Fit w={33}>16s</Fit>
                  <Battery />
                </Timer>
                <Slot $w={42} />
                <HomeIcon />
                <Slot $w={45} />
                <ChatIcon />
                <Divider $h={68} $l={25} $r={26} />
                <MenuIcon />
              </ToolIcons>
            </NavBar>
            <Viewport>
              <Page>
                <Listing>
                  {rows.map((r) => (
                    <Entry key={r.name}>
                      {r.hand ? <HandFile /> : <UnknownFile />}
                      <Link $visited={r.visited} $focus={r.focus}>
                        <Fit w={r.w}>{r.name}</Fit>
                      </Link>
                      <When>
                        <Fit w={290}>{r.date}</Fit>
                      </When>
                      <Size>{r.size}</Size>
                    </Entry>
                  ))}
                </Listing>
                <Rule />
                <Address>
                  <Fit w={983}>Apache/2.2.22 (Ubuntu) Server at kernel.ubuntu.com Port 80</Fit>
                </Address>
              </Page>
              <ScrollBar>
                <ScrollCap $h={25}>
                  <svg width="16" height="8" viewBox="0 0 16 8">
                    <path d="M0 8h14L7 0z" fill="#777" />
                  </svg>
                </ScrollCap>
                <Trough />
                <Thumb>
                  <Grip />
                  <Grip />
                  <Grip />
                </Thumb>
                <ScrollCap $h={25} $end>
                  <svg width="16" height="8" viewBox="0 0 16 8">
                    <path d="M0 0h14L7 8z" fill="#aaa" />
                  </svg>
                </ScrollCap>
              </ScrollBar>
            </Viewport>
          </Browser>
        </Workspace>
        <StatusBar>
          <StatusHdd />
          <StatusDisc />
          <StatusUsb />
          <StatusNet />
          <StatusFolder />
          <StatusCamera />
          <StatusChip />
          <StatusDivider />
          <StatusMouse />
          <StatusKey />
          <StatusText>
            <Fit w={44}>Left</Fit>
            <svg width="22" height="22" viewBox="0 0 22 22">
              <path
                d="M7 7h8v8H7zM7 7H4.500A3 3 0 1 1 7 4.500zM15 7V4.500A3 3 0 1 1 17.500 7zM15 15h2.500a3 3 0 1 1-2.500 2.500zM7 15v2.500A3 3 0 1 1 4.500 15z"
                fill="none"
                stroke="#000"
                strokeWidth="2"
              />
            </svg>
          </StatusText>
          <ResizeGrip />
        </StatusBar>
      </VmWindow>
    </Screen>
  );
}
